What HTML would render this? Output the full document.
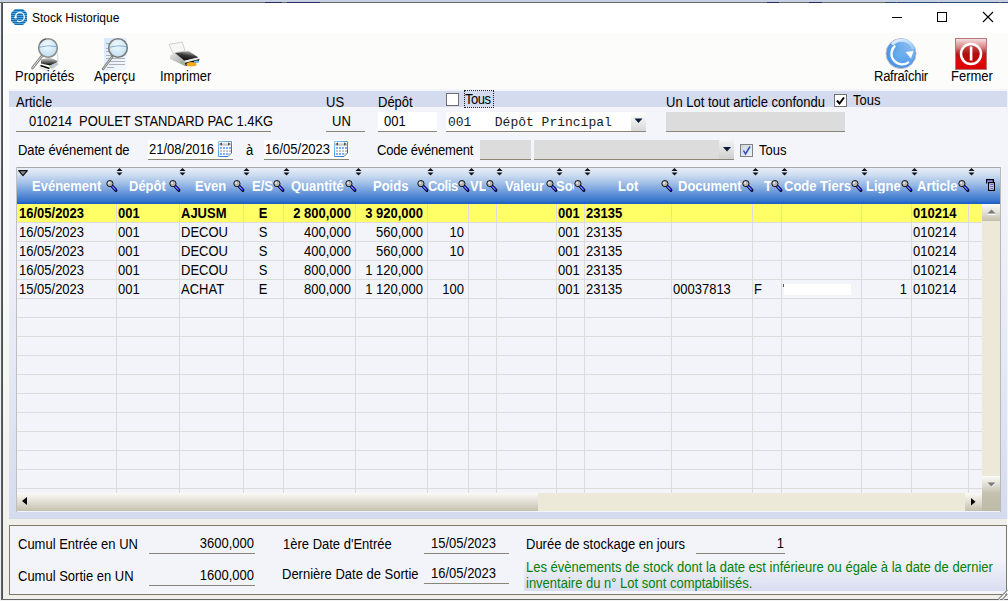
<!DOCTYPE html>
<html><head><meta charset="utf-8"><title>Stock Historique</title>
<style>
html,body{margin:0;padding:0}
.s{transform:scaleY(1.08);transform-origin:0 11px}
body{width:1008px;height:601px;position:relative;overflow:hidden;background:#fff;font-family:"Liberation Sans",sans-serif}
.t{position:absolute;white-space:pre;font-family:"Liberation Sans",sans-serif}
svg{overflow:visible}
</style></head><body>
<div style="position:absolute;left:0px;top:0px;width:1008px;height:2px;background:#c5d0e2"></div>
<div style="position:absolute;left:0px;top:2px;width:1008px;height:1px;background:#6a6a6a"></div>
<div style="position:absolute;left:265px;top:2px;width:17px;height:1px;background:#2a2a60"></div>
<div style="position:absolute;left:287px;top:2px;width:33px;height:1px;background:#2a2a60"></div>
<div style="position:absolute;left:767px;top:2px;width:12px;height:1px;background:#2a2a60"></div>
<div style="position:absolute;left:809px;top:2px;width:13px;height:1px;background:#2a2a60"></div>
<div style="position:absolute;left:885px;top:2px;width:11px;height:1px;background:#2a4a72"></div>
<div style="position:absolute;left:897px;top:2px;width:41px;height:1px;background:#2a4a72"></div>
<div style="position:absolute;left:939px;top:2px;width:60px;height:1px;background:#2a4a72"></div>
<div style="position:absolute;left:1001px;top:2px;width:7px;height:1px;background:#2a4a72"></div>
<div style="position:absolute;left:0px;top:3px;width:1px;height:598px;background:#eeeeee"></div>
<div style="position:absolute;left:1px;top:3px;width:1px;height:598px;background:#5c6068"></div>
<div style="position:absolute;left:2px;top:3px;width:1px;height:597px;background:#4a4f58"></div>
<div style="position:absolute;left:3px;top:3px;width:1005px;height:30px;background:#ffffff"></div>
<div style="position:absolute;left:3px;top:33px;width:1005px;height:56px;background:#fcfcfa"></div>
<div style="position:absolute;left:3px;top:89px;width:6px;height:510px;background:linear-gradient(#fbfbfb,#f8f8f5 40%,#efeee9)"></div>
<div style="position:absolute;left:9px;top:89px;width:999px;height:430px;background:#f4f5fa"></div>
<svg style="position:absolute;left:11px;top:9px" width="16" height="16" viewBox="0 0 16 16"><defs><pattern id="st" width="16" height="2" patternUnits="userSpaceOnUse"><rect width="16" height="1" fill="#4aa8dc"/><rect y="1" width="16" height="1" fill="#1668b4"/></pattern></defs>
<polygon points="4,0 12,0 16,4 16,12 12,16 4,16 0,12 0,4" fill="url(#st)"/>
<path d="M4.6,8.2 C4.2,5.2 6.5,3.4 8.9,3.4 C11.6,3.4 13.3,5.6 13.3,8.2 C13.3,10.8 11.2,12.6 8.6,12.6 C7.6,12.6 6.8,12.3 6.2,11.9" fill="none" stroke="#fff" stroke-width="1.3"/>
<circle cx="4.6" cy="8.2" r="1.2" fill="#fff"/></svg>
<div class="t" style="left:32px;top:12px;font-size:12px;line-height:12px;color:#000;font-weight:normal;font-family:'Liberation Sans',sans-serif;">Stock Historique</div>
<div style="position:absolute;left:892px;top:17px;width:10px;height:1px;background:#000"></div>
<div style="position:absolute;left:937px;top:12px;width:10px;height:10px;border:1px solid #000;box-sizing:border-box"></div>
<svg style="position:absolute;left:982px;top:11px" width="12" height="12" viewBox="0 0 12 12"><path d="M1,1 L11,11 M11,1 L1,11" stroke="#000" stroke-width="1.1"/></svg>
<svg style="position:absolute;left:30px;top:36px" width="34" height="36" viewBox="0 0 34 36"><defs><radialGradient id="lens" cx="0.45" cy="0.35" r="0.7"><stop offset="0" stop-color="#f4fbff"/><stop offset="1" stop-color="#b9dcef"/></radialGradient>
<linearGradient id="ptop" x1="0" y1="0" x2="0" y2="1"><stop offset="0" stop-color="#e0e0e0"/><stop offset="0.6" stop-color="#606060"/><stop offset="1" stop-color="#000"/></linearGradient></defs>
<path d="M11.5,20.5 L2.5,32" stroke="#808080" stroke-width="2.8" stroke-linecap="round"/>
<path d="M11.5,20.5 L2.5,32" stroke="#eeeeee" stroke-width="0.9" stroke-linecap="round"/>
<path d="M27.5,17 L28,26" stroke="#d0d8e0" stroke-width="1"/>
<polygon points="11,23.5 20,21.5 27.5,25 26.5,27 20,29.5 11,27.5" fill="url(#ptop)"/>
<polygon points="20,29.5 27.5,26 28.5,28.5 21.5,33.5" fill="#c4c9d2"/>
<path d="M10.5,29.5 L19.5,32.5" stroke="#000" stroke-width="1.6"/>
<path d="M9.5,31.5 L17,34.5" stroke="#c8c8c8" stroke-width="0.8"/>
<circle cx="20.8" cy="31" r="1.1" fill="#8ed070"/>
<circle cx="18" cy="12" r="9.3" fill="url(#lens)" stroke="#8c8c8c" stroke-width="1.6"/>
<path d="M10,7 A9.3,9.3 0 0 1 16,2.8" stroke="#5a5a5a" stroke-width="1.2" fill="none"/>
<path d="M9.5,11.2 Q18,8.6 26.8,10.6" stroke="#6a9fd0" stroke-width="0.8" fill="none"/></svg>
<svg style="position:absolute;left:100px;top:36px" width="32" height="36" viewBox="0 0 32 36"><defs><linearGradient id="pg" x1="0" y1="0" x2="1" y2="1"><stop offset="0" stop-color="#d6e8fc"/><stop offset="1" stop-color="#f6faff"/></linearGradient></defs>
<rect x="4" y="2" width="23" height="33" fill="url(#pg)"/>
<g stroke="#b0b0b0" stroke-width="1"><line x1="6" y1="7.5" x2="12" y2="7.5"/><line x1="6" y1="12.5" x2="12" y2="12.5"/><line x1="6" y1="15.5" x2="12" y2="15.5"/><line x1="6" y1="19.5" x2="12" y2="19.5"/><line x1="6" y1="22.5" x2="25" y2="22.5"/><line x1="10" y1="25.5" x2="25" y2="25.5"/><line x1="9" y1="28.5" x2="25" y2="28.5"/><line x1="7" y1="31.5" x2="14" y2="31.5"/></g>
<path d="M12,21 L3,33" stroke="#7a7a7a" stroke-width="2.4" stroke-linecap="round"/>
<path d="M12,21 L3,33" stroke="#e0e0e0" stroke-width="0.8"/>
<circle cx="18" cy="12" r="9.3" fill="url(#lens)" stroke="#7c7c7c" stroke-width="1.6" fill-opacity="0.92"/>
<path d="M9.5,11.2 Q18,8.6 26.8,10.6" stroke="#6a9fd0" stroke-width="0.8" fill="none"/></svg>
<svg style="position:absolute;left:165px;top:38px" width="40" height="32" viewBox="0 0 40 32"><defs><linearGradient id="pb" x1="0.7" y1="0" x2="0.3" y2="1"><stop offset="0" stop-color="#c8c8c8"/><stop offset="0.45" stop-color="#3a3a3a"/><stop offset="1" stop-color="#050505"/></linearGradient>
<linearGradient id="pl" x1="0" y1="0" x2="1" y2="1"><stop offset="0" stop-color="#e4e4e4"/><stop offset="1" stop-color="#a0a0a0"/></linearGradient></defs>
<polygon points="4,6.4 17.2,4 20.1,13 7.9,15.4" fill="#f7f7f7" stroke="#c4c4c4" stroke-width="0.8"/>
<polygon points="5,17.5 10,15 20,22.6 20,28 5,21" fill="url(#pl)"/>
<polygon points="10,15 23.7,13 33.5,19.6 19.5,22.8" fill="url(#pb)"/>
<polygon points="19.5,22.8 33.5,19.6 34.5,21 20,24.8" fill="#ececec"/>
<polygon points="20,24.8 34.5,21 33.5,24 20.5,28" fill="#0a0a0a"/>
<ellipse cx="26.5" cy="26.2" rx="5" ry="2.2" fill="#f2aa1a"/>
<ellipse cx="31.5" cy="23.8" rx="2.6" ry="1.2" fill="#6cc4f2"/>
<circle cx="17" cy="24.5" r="1" fill="#74d050"/></svg>
<svg style="position:absolute;left:884px;top:36px" width="34" height="34" viewBox="0 0 34 34"><defs><radialGradient id="rb" cx="0.45" cy="0.55" r="0.6"><stop offset="0" stop-color="#5aa6ec"/><stop offset="0.75" stop-color="#3f8fe4"/><stop offset="1" stop-color="#2a70d6"/></radialGradient>
<linearGradient id="rh" x1="0" y1="0" x2="1" y2="1"><stop offset="0" stop-color="#e4f2ff"/><stop offset="1" stop-color="#8cc8fa"/></linearGradient>
<linearGradient id="rs" x1="1" y1="0" x2="0" y2="1"><stop offset="0" stop-color="#ffffff" stop-opacity="0.55"/><stop offset="0.5" stop-color="#ffffff" stop-opacity="0.12"/><stop offset="1" stop-color="#ffffff" stop-opacity="0"/></linearGradient></defs>
<circle cx="17" cy="17.6" r="15" fill="url(#rb)" stroke="#c7bcc8" stroke-width="1"/>
<circle cx="17" cy="17.6" r="14" fill="url(#rs)"/>
<path d="M8,8.5 A12.5,12.5 0 0 1 29.5,13.5" fill="none" stroke="url(#rh)" stroke-width="3"/>
<path d="M11.2,9.6 A10.3,10.3 0 1 0 25,25.8" fill="none" stroke="#fff" stroke-width="2.3"/>
<polygon points="21.5,16 29.5,15 27,22.5" fill="#fff"/></svg>
<svg style="position:absolute;left:955px;top:38px" width="32" height="32" viewBox="0 0 32 32"><defs><linearGradient id="fr" x1="0" y1="0" x2="0" y2="1"><stop offset="0" stop-color="#f6eaea"/><stop offset="0.3" stop-color="#d88080"/><stop offset="0.5" stop-color="#b01818"/><stop offset="0.7" stop-color="#e00808"/><stop offset="1" stop-color="#d80000"/></linearGradient></defs>
<rect x="0" y="0" width="32" height="32" fill="url(#fr)"/>
<rect x="0.5" y="0.5" width="31" height="31" fill="none" stroke="#b87878" stroke-width="1"/>
<circle cx="16" cy="16" r="9.5" fill="#a80a0a" fill-opacity="0.55"/>
<circle cx="16" cy="16" r="10" fill="none" stroke="#fff" stroke-width="2.5"/>
<rect x="14.8" y="8.5" width="2.6" height="14" fill="#fff"/></svg>
<div class="t s" style="left:15px;top:70px;font-size:13px;line-height:13px;color:#000;font-weight:normal;font-family:'Liberation Sans',sans-serif;">Propriétés</div>
<div class="t s" style="left:94px;top:70px;font-size:13px;line-height:13px;color:#000;font-weight:normal;font-family:'Liberation Sans',sans-serif;">Aperçu</div>
<div class="t s" style="left:160px;top:70px;font-size:13px;line-height:13px;color:#000;font-weight:normal;font-family:'Liberation Sans',sans-serif;">Imprimer</div>
<div class="t s" style="left:874px;top:70px;font-size:13px;line-height:13px;color:#000;font-weight:normal;font-family:'Liberation Sans',sans-serif;letter-spacing:-0.25px">Rafraîchir</div>
<div class="t s" style="left:951px;top:70px;font-size:13px;line-height:13px;color:#000;font-weight:normal;font-family:'Liberation Sans',sans-serif;">Fermer</div>
<div style="position:absolute;left:9px;top:91px;width:998px;height:16px;background:#d5dbee"></div>
<div class="t s" style="left:16px;top:96px;font-size:13px;line-height:13px;color:#000;font-weight:normal;font-family:'Liberation Sans',sans-serif;">Article</div>
<div class="t s" style="left:326px;top:96px;font-size:13px;line-height:13px;color:#000;font-weight:normal;font-family:'Liberation Sans',sans-serif;">US</div>
<div class="t s" style="left:378px;top:96px;font-size:13px;line-height:13px;color:#000;font-weight:normal;font-family:'Liberation Sans',sans-serif;">Dépôt</div>
<div style="position:absolute;left:446px;top:93px;width:13px;height:13px;background:#fff;border:1px solid #707070;box-sizing:border-box"></div>
<div style="position:absolute;left:464px;top:90px;width:30px;height:18px;border:1px dotted #222;box-sizing:border-box"></div>
<div class="t s" style="left:465px;top:93px;font-size:13px;line-height:13px;color:#000;font-weight:normal;font-family:'Liberation Sans',sans-serif;letter-spacing:-0.5px">Tous</div>
<div class="t s" style="left:666px;top:96px;font-size:13px;line-height:13px;color:#000;font-weight:normal;font-family:'Liberation Sans',sans-serif;">Un Lot tout article confondu</div>
<div style="position:absolute;left:834px;top:94px;width:13px;height:13px;background:#fff;border:1px solid #707070;box-sizing:border-box"></div>
<svg style="position:absolute;left:834px;top:94px" width="13" height="13" viewBox="0 0 13 13"><path d="M3,6.5 L5.5,9.5 L10,3.5" fill="none" stroke="#000" stroke-width="2"/></svg>
<div class="t s" style="left:853px;top:94px;font-size:13px;line-height:13px;color:#000;font-weight:normal;font-family:'Liberation Sans',sans-serif;">Tous</div>
<div style="position:absolute;left:16px;top:131px;width:255px;height:1px;background:#8b8574"></div>
<div class="t s" style="left:29px;top:115px;font-size:13px;line-height:13px;color:#000;font-weight:normal;font-family:'Liberation Sans',sans-serif;letter-spacing:-0.07px">010214&nbsp; POULET STANDARD PAC 1.4KG</div>
<div style="position:absolute;left:326px;top:131px;width:39px;height:1px;background:#8b8574"></div>
<div class="t s" style="left:332px;top:115px;font-size:13px;line-height:13px;color:#000;font-weight:normal;font-family:'Liberation Sans',sans-serif;">UN</div>
<div style="position:absolute;left:378px;top:112px;width:59px;height:19px;background:#fff"></div>
<div style="position:absolute;left:378px;top:131px;width:59px;height:1px;background:#8b8574"></div>
<div class="t s" style="left:384px;top:115px;font-size:13px;line-height:13px;color:#000;font-weight:normal;font-family:'Liberation Sans',sans-serif;">001</div>
<div style="position:absolute;left:446px;top:112px;width:185px;height:19px;background:#fff"></div>
<div style="position:absolute;left:631px;top:112px;width:15px;height:19px;background:linear-gradient(#ffffff,#d8d8d8)"></div>
<div style="position:absolute;left:446px;top:131px;width:200px;height:1px;background:#8b8574"></div>
<svg style="position:absolute;left:634px;top:118px" width="9" height="6" viewBox="0 0 9 6"><polygon points="0.5,0.5 8.5,0.5 4.5,5" fill="#0a1a3a"/></svg>
<div class="t" style="left:448px;top:116px;font-size:13px;line-height:13px;color:#1a1a1a;font-weight:normal;font-family:'Liberation Mono',monospace;">001&nbsp;&nbsp;&nbsp;Dépôt Principal</div>
<div style="position:absolute;left:666px;top:112px;width:179px;height:19px;background:#dcdcdc"></div>
<div style="position:absolute;left:666px;top:131px;width:179px;height:1px;background:#8b8574"></div>
<div class="t s" style="left:18px;top:144px;font-size:13px;line-height:13px;color:#000;font-weight:normal;font-family:'Liberation Sans',sans-serif;letter-spacing:-0.12px">Date événement de</div>
<div style="position:absolute;left:148px;top:140px;width:85px;height:19px;background:#fff"></div>
<div style="position:absolute;left:148px;top:159px;width:85px;height:1px;background:#8b8574"></div>
<div class="t s" style="left:149px;top:143px;font-size:13px;line-height:13px;color:#000;font-weight:normal;font-family:'Liberation Sans',sans-serif;">21/08/2016</div>
<svg style="position:absolute;left:218px;top:141px" width="14" height="16" viewBox="0 0 14 16"><defs><linearGradient id="cb148" x1="0" y1="0" x2="1" y2="1"><stop offset="0" stop-color="#8ad0f4"/><stop offset="1" stop-color="#1a58bc"/></linearGradient>
<linearGradient id="ch148" x1="0" y1="0" x2="0" y2="1"><stop offset="0" stop-color="#f4f4f4"/><stop offset="1" stop-color="#b4b4b4"/></linearGradient></defs>
<path d="M0.5,0.5 H13.5 V12 L10,15.5 H0.5 Z" fill="#fff" stroke="url(#cb148)" stroke-width="1"/>
<rect x="1" y="1.5" width="12" height="3" fill="url(#ch148)"/>
<polygon points="1.5,3 4,1.2 4,4.8" fill="#555"/><polygon points="12.5,3 10,1.2 10,4.8" fill="#555"/>
<g fill="#7eaefa"><rect x="2" y="6" width="2" height="2"/><rect x="5" y="6" width="2" height="2"/><rect x="8" y="6" width="2" height="2"/><rect x="11" y="6" width="2" height="2"/>
<rect x="2" y="12" width="2" height="2"/><rect x="5" y="12" width="2" height="2"/><rect x="8" y="12" width="2" height="2"/></g>
<g fill="#c4c4c4"><rect x="2" y="9" width="2" height="2"/><rect x="5" y="9" width="2" height="2"/><rect x="8" y="9" width="2" height="2"/><rect x="11" y="9" width="2" height="2"/></g>
<polygon points="10,15.2 10.5,12 13.2,12" fill="#c8c8c8"/></svg>
<div class="t s" style="left:246px;top:144px;font-size:13px;line-height:13px;color:#000;font-weight:normal;font-family:'Liberation Sans',sans-serif;">à</div>
<div style="position:absolute;left:264px;top:140px;width:85px;height:19px;background:#fff"></div>
<div style="position:absolute;left:264px;top:159px;width:85px;height:1px;background:#8b8574"></div>
<div class="t s" style="left:265px;top:143px;font-size:13px;line-height:13px;color:#000;font-weight:normal;font-family:'Liberation Sans',sans-serif;">16/05/2023</div>
<svg style="position:absolute;left:334px;top:141px" width="14" height="16" viewBox="0 0 14 16"><defs><linearGradient id="cb264" x1="0" y1="0" x2="1" y2="1"><stop offset="0" stop-color="#8ad0f4"/><stop offset="1" stop-color="#1a58bc"/></linearGradient>
<linearGradient id="ch264" x1="0" y1="0" x2="0" y2="1"><stop offset="0" stop-color="#f4f4f4"/><stop offset="1" stop-color="#b4b4b4"/></linearGradient></defs>
<path d="M0.5,0.5 H13.5 V12 L10,15.5 H0.5 Z" fill="#fff" stroke="url(#cb264)" stroke-width="1"/>
<rect x="1" y="1.5" width="12" height="3" fill="url(#ch264)"/>
<polygon points="1.5,3 4,1.2 4,4.8" fill="#555"/><polygon points="12.5,3 10,1.2 10,4.8" fill="#555"/>
<g fill="#7eaefa"><rect x="2" y="6" width="2" height="2"/><rect x="5" y="6" width="2" height="2"/><rect x="8" y="6" width="2" height="2"/><rect x="11" y="6" width="2" height="2"/>
<rect x="2" y="12" width="2" height="2"/><rect x="5" y="12" width="2" height="2"/><rect x="8" y="12" width="2" height="2"/></g>
<g fill="#c4c4c4"><rect x="2" y="9" width="2" height="2"/><rect x="5" y="9" width="2" height="2"/><rect x="8" y="9" width="2" height="2"/><rect x="11" y="9" width="2" height="2"/></g>
<polygon points="10,15.2 10.5,12 13.2,12" fill="#c8c8c8"/></svg>
<div class="t s" style="left:377px;top:144px;font-size:13px;line-height:13px;color:#000;font-weight:normal;font-family:'Liberation Sans',sans-serif;letter-spacing:-0.2px">Code événement</div>
<div style="position:absolute;left:480px;top:140px;width:51px;height:19px;background:#dcdcdc"></div>
<div style="position:absolute;left:480px;top:159px;width:51px;height:1px;background:#8b8574"></div>
<div style="position:absolute;left:534px;top:140px;width:185px;height:19px;background:#dcdcdc"></div>
<div style="position:absolute;left:719px;top:140px;width:15px;height:19px;background:linear-gradient(#f2f2f2,#cfcfcf)"></div>
<div style="position:absolute;left:534px;top:159px;width:200px;height:1px;background:#8b8574"></div>
<svg style="position:absolute;left:723px;top:147px" width="8" height="5" viewBox="0 0 8 5"><polygon points="0,0 8,0 4,4.5" fill="#0a1a3a"/></svg>
<div style="position:absolute;left:740px;top:144px;width:13px;height:13px;background:linear-gradient(135deg,#cfd6e4,#f0f2f6);border:1px solid #808080;box-sizing:border-box"></div>
<svg style="position:absolute;left:740px;top:144px" width="13" height="13" viewBox="0 0 13 13"><path d="M3.5,6.5 L5.5,10 L10,2.5" fill="none" stroke="#3050b0" stroke-width="1.5"/></svg>
<div class="t s" style="left:759px;top:144px;font-size:13px;line-height:13px;color:#000;font-weight:normal;font-family:'Liberation Sans',sans-serif;">Tous</div>
<div style="position:absolute;left:9px;top:160px;width:998px;height:359px;background:linear-gradient(#f4f5fa 0%,#e4e8f5 60%,#d5dbee 100%)"></div>
<div style="position:absolute;left:16px;top:167px;width:985px;height:345px;background:#f3f4fa"></div>
<div style="position:absolute;left:16px;top:167px;width:985px;height:1px;background:#a8a8a8"></div>
<div style="position:absolute;left:16px;top:167px;width:1px;height:345px;background:#c0c0c0"></div>
<div style="position:absolute;left:1000px;top:167px;width:1px;height:345px;background:#b8b8b8"></div>
<div style="position:absolute;left:17px;top:168px;width:983px;height:36px;background:linear-gradient(#e8eef8 0%,#cddcf0 20%,#9bbbe6 45%,#6394d8 70%,#3a76cd 90%,#2464c4 97%,#1a5abf 100%)"></div>
<div style="position:absolute;left:17px;top:204px;width:965px;height:18px;background:#ffff66"></div>
<div style="position:absolute;left:17px;top:222px;width:965px;height:1px;background:#dcdcdc"></div>
<div style="position:absolute;left:17px;top:241px;width:965px;height:1px;background:#dcdcdc"></div>
<div style="position:absolute;left:17px;top:260px;width:965px;height:1px;background:#dcdcdc"></div>
<div style="position:absolute;left:17px;top:279px;width:965px;height:1px;background:#dcdcdc"></div>
<div style="position:absolute;left:17px;top:298px;width:965px;height:1px;background:#dcdcdc"></div>
<div style="position:absolute;left:17px;top:317px;width:965px;height:1px;background:#dcdcdc"></div>
<div style="position:absolute;left:17px;top:336px;width:965px;height:1px;background:#dcdcdc"></div>
<div style="position:absolute;left:17px;top:355px;width:965px;height:1px;background:#dcdcdc"></div>
<div style="position:absolute;left:17px;top:374px;width:965px;height:1px;background:#dcdcdc"></div>
<div style="position:absolute;left:17px;top:393px;width:965px;height:1px;background:#dcdcdc"></div>
<div style="position:absolute;left:17px;top:412px;width:965px;height:1px;background:#dcdcdc"></div>
<div style="position:absolute;left:17px;top:431px;width:965px;height:1px;background:#dcdcdc"></div>
<div style="position:absolute;left:17px;top:450px;width:965px;height:1px;background:#dcdcdc"></div>
<div style="position:absolute;left:17px;top:469px;width:965px;height:1px;background:#dcdcdc"></div>
<div style="position:absolute;left:17px;top:488px;width:965px;height:1px;background:#dcdcdc"></div>
<div style="position:absolute;left:116px;top:204px;width:1px;height:289px;background:#dcdcdc"></div>
<div style="position:absolute;left:179px;top:204px;width:1px;height:289px;background:#dcdcdc"></div>
<div style="position:absolute;left:243px;top:204px;width:1px;height:289px;background:#dcdcdc"></div>
<div style="position:absolute;left:283px;top:204px;width:1px;height:289px;background:#dcdcdc"></div>
<div style="position:absolute;left:355px;top:204px;width:1px;height:289px;background:#dcdcdc"></div>
<div style="position:absolute;left:427px;top:204px;width:1px;height:289px;background:#dcdcdc"></div>
<div style="position:absolute;left:468px;top:204px;width:1px;height:289px;background:#dcdcdc"></div>
<div style="position:absolute;left:496px;top:204px;width:1px;height:289px;background:#dcdcdc"></div>
<div style="position:absolute;left:556px;top:204px;width:1px;height:289px;background:#dcdcdc"></div>
<div style="position:absolute;left:584px;top:204px;width:1px;height:289px;background:#dcdcdc"></div>
<div style="position:absolute;left:671px;top:204px;width:1px;height:289px;background:#dcdcdc"></div>
<div style="position:absolute;left:752px;top:204px;width:1px;height:289px;background:#dcdcdc"></div>
<div style="position:absolute;left:781px;top:204px;width:1px;height:289px;background:#dcdcdc"></div>
<div style="position:absolute;left:861px;top:204px;width:1px;height:289px;background:#dcdcdc"></div>
<div style="position:absolute;left:911px;top:204px;width:1px;height:289px;background:#dcdcdc"></div>
<div style="position:absolute;left:968px;top:204px;width:1px;height:289px;background:#dcdcdc"></div>
<div class="t s" style="left:32px;width:74px;overflow:hidden;top:180px;font-size:13px;line-height:13px;color:#fff;font-weight:bold;">Evénement</div>
<div class="t s" style="left:129px;width:40px;overflow:hidden;top:180px;font-size:13px;line-height:13px;color:#fff;font-weight:bold;">Dépôt</div>
<div class="t s" style="left:195px;width:38px;overflow:hidden;top:180px;font-size:13px;line-height:13px;color:#fff;font-weight:bold;">Even</div>
<div class="t s" style="left:252px;width:21px;overflow:hidden;top:180px;font-size:13px;line-height:13px;color:#fff;font-weight:bold;">E/S</div>
<div class="t s" style="left:291px;width:54px;overflow:hidden;top:180px;font-size:13px;line-height:13px;color:#fff;font-weight:bold;">Quantité</div>
<div class="t s" style="left:373px;width:44px;overflow:hidden;top:180px;font-size:13px;line-height:13px;color:#fff;font-weight:bold;">Poids</div>
<div class="t s" style="left:428px;width:30px;overflow:hidden;top:180px;font-size:13px;line-height:13px;color:#fff;font-weight:bold;letter-spacing:-0.4px;">Colis</div>
<div class="t s" style="left:470px;width:16px;overflow:hidden;top:180px;font-size:13px;line-height:13px;color:#fff;font-weight:bold;">VL</div>
<div class="t s" style="left:505px;width:41px;overflow:hidden;top:180px;font-size:13px;line-height:13px;color:#fff;font-weight:bold;">Valeur</div>
<div class="t s" style="left:556px;width:18px;overflow:hidden;top:180px;font-size:13px;line-height:13px;color:#fff;font-weight:bold;">Soc</div>
<div class="t s" style="left:618px;width:43px;overflow:hidden;top:180px;font-size:13px;line-height:13px;color:#fff;font-weight:bold;">Lot</div>
<div class="t s" style="left:678px;width:64px;overflow:hidden;top:180px;font-size:13px;line-height:13px;color:#fff;font-weight:bold;">Document</div>
<div class="t s" style="left:764px;width:7px;overflow:hidden;top:180px;font-size:13px;line-height:13px;color:#fff;font-weight:bold;">T</div>
<div class="t s" style="left:784px;width:67px;overflow:hidden;top:180px;font-size:13px;line-height:13px;color:#fff;font-weight:bold;">Code Tiers</div>
<div class="t s" style="left:866px;width:35px;overflow:hidden;top:180px;font-size:13px;line-height:13px;color:#fff;font-weight:bold;">Ligne</div>
<div class="t s" style="left:917px;width:41px;overflow:hidden;top:180px;font-size:13px;line-height:13px;color:#fff;font-weight:bold;">Article</div>
<svg style="position:absolute;left:106px;top:180px" width="11" height="11" viewBox="0 0 11 11"><path d="M5.5,5.5 L9.8,10.2" stroke="#000" stroke-width="3.2" stroke-linecap="round"/><path d="M5.7,5.7 L9.5,9.9" stroke="#1c1cff" stroke-width="2" stroke-linecap="round"/><path d="M6.3,6.5 L9.1,9.6" stroke="#fff" stroke-width="0.7"/><circle cx="3.9" cy="3.6" r="3.1" fill="#b4b4b4" stroke="#111" stroke-width="1"/><circle cx="3.1" cy="2.8" r="1.1" fill="#e8e8e8"/></svg>
<svg style="position:absolute;left:169px;top:180px" width="11" height="11" viewBox="0 0 11 11"><path d="M5.5,5.5 L9.8,10.2" stroke="#000" stroke-width="3.2" stroke-linecap="round"/><path d="M5.7,5.7 L9.5,9.9" stroke="#1c1cff" stroke-width="2" stroke-linecap="round"/><path d="M6.3,6.5 L9.1,9.6" stroke="#fff" stroke-width="0.7"/><circle cx="3.9" cy="3.6" r="3.1" fill="#b4b4b4" stroke="#111" stroke-width="1"/><circle cx="3.1" cy="2.8" r="1.1" fill="#e8e8e8"/></svg>
<svg style="position:absolute;left:116px;top:168px" width="7" height="8" viewBox="0 0 7 8"><polygon points="3.5,0 6.5,3 0.5,3" fill="#111"/><polygon points="0.5,4.5 6.5,4.5 3.5,7.5" fill="#111"/></svg>
<svg style="position:absolute;left:233px;top:180px" width="11" height="11" viewBox="0 0 11 11"><path d="M5.5,5.5 L9.8,10.2" stroke="#000" stroke-width="3.2" stroke-linecap="round"/><path d="M5.7,5.7 L9.5,9.9" stroke="#1c1cff" stroke-width="2" stroke-linecap="round"/><path d="M6.3,6.5 L9.1,9.6" stroke="#fff" stroke-width="0.7"/><circle cx="3.9" cy="3.6" r="3.1" fill="#b4b4b4" stroke="#111" stroke-width="1"/><circle cx="3.1" cy="2.8" r="1.1" fill="#e8e8e8"/></svg>
<svg style="position:absolute;left:179px;top:168px" width="7" height="8" viewBox="0 0 7 8"><polygon points="3.5,0 6.5,3 0.5,3" fill="#111"/><polygon points="0.5,4.5 6.5,4.5 3.5,7.5" fill="#111"/></svg>
<svg style="position:absolute;left:273px;top:180px" width="11" height="11" viewBox="0 0 11 11"><path d="M5.5,5.5 L9.8,10.2" stroke="#000" stroke-width="3.2" stroke-linecap="round"/><path d="M5.7,5.7 L9.5,9.9" stroke="#1c1cff" stroke-width="2" stroke-linecap="round"/><path d="M6.3,6.5 L9.1,9.6" stroke="#fff" stroke-width="0.7"/><circle cx="3.9" cy="3.6" r="3.1" fill="#b4b4b4" stroke="#111" stroke-width="1"/><circle cx="3.1" cy="2.8" r="1.1" fill="#e8e8e8"/></svg>
<svg style="position:absolute;left:243px;top:168px" width="7" height="8" viewBox="0 0 7 8"><polygon points="3.5,0 6.5,3 0.5,3" fill="#111"/><polygon points="0.5,4.5 6.5,4.5 3.5,7.5" fill="#111"/></svg>
<svg style="position:absolute;left:345px;top:180px" width="11" height="11" viewBox="0 0 11 11"><path d="M5.5,5.5 L9.8,10.2" stroke="#000" stroke-width="3.2" stroke-linecap="round"/><path d="M5.7,5.7 L9.5,9.9" stroke="#1c1cff" stroke-width="2" stroke-linecap="round"/><path d="M6.3,6.5 L9.1,9.6" stroke="#fff" stroke-width="0.7"/><circle cx="3.9" cy="3.6" r="3.1" fill="#b4b4b4" stroke="#111" stroke-width="1"/><circle cx="3.1" cy="2.8" r="1.1" fill="#e8e8e8"/></svg>
<svg style="position:absolute;left:283px;top:168px" width="7" height="8" viewBox="0 0 7 8"><polygon points="3.5,0 6.5,3 0.5,3" fill="#111"/><polygon points="0.5,4.5 6.5,4.5 3.5,7.5" fill="#111"/></svg>
<svg style="position:absolute;left:417px;top:180px" width="11" height="11" viewBox="0 0 11 11"><path d="M5.5,5.5 L9.8,10.2" stroke="#000" stroke-width="3.2" stroke-linecap="round"/><path d="M5.7,5.7 L9.5,9.9" stroke="#1c1cff" stroke-width="2" stroke-linecap="round"/><path d="M6.3,6.5 L9.1,9.6" stroke="#fff" stroke-width="0.7"/><circle cx="3.9" cy="3.6" r="3.1" fill="#b4b4b4" stroke="#111" stroke-width="1"/><circle cx="3.1" cy="2.8" r="1.1" fill="#e8e8e8"/></svg>
<svg style="position:absolute;left:355px;top:168px" width="7" height="8" viewBox="0 0 7 8"><polygon points="3.5,0 6.5,3 0.5,3" fill="#111"/><polygon points="0.5,4.5 6.5,4.5 3.5,7.5" fill="#111"/></svg>
<svg style="position:absolute;left:458px;top:180px" width="11" height="11" viewBox="0 0 11 11"><path d="M5.5,5.5 L9.8,10.2" stroke="#000" stroke-width="3.2" stroke-linecap="round"/><path d="M5.7,5.7 L9.5,9.9" stroke="#1c1cff" stroke-width="2" stroke-linecap="round"/><path d="M6.3,6.5 L9.1,9.6" stroke="#fff" stroke-width="0.7"/><circle cx="3.9" cy="3.6" r="3.1" fill="#b4b4b4" stroke="#111" stroke-width="1"/><circle cx="3.1" cy="2.8" r="1.1" fill="#e8e8e8"/></svg>
<svg style="position:absolute;left:427px;top:168px" width="7" height="8" viewBox="0 0 7 8"><polygon points="3.5,0 6.5,3 0.5,3" fill="#111"/><polygon points="0.5,4.5 6.5,4.5 3.5,7.5" fill="#111"/></svg>
<svg style="position:absolute;left:486px;top:180px" width="11" height="11" viewBox="0 0 11 11"><path d="M5.5,5.5 L9.8,10.2" stroke="#000" stroke-width="3.2" stroke-linecap="round"/><path d="M5.7,5.7 L9.5,9.9" stroke="#1c1cff" stroke-width="2" stroke-linecap="round"/><path d="M6.3,6.5 L9.1,9.6" stroke="#fff" stroke-width="0.7"/><circle cx="3.9" cy="3.6" r="3.1" fill="#b4b4b4" stroke="#111" stroke-width="1"/><circle cx="3.1" cy="2.8" r="1.1" fill="#e8e8e8"/></svg>
<svg style="position:absolute;left:468px;top:168px" width="7" height="8" viewBox="0 0 7 8"><polygon points="3.5,0 6.5,3 0.5,3" fill="#111"/><polygon points="0.5,4.5 6.5,4.5 3.5,7.5" fill="#111"/></svg>
<svg style="position:absolute;left:546px;top:180px" width="11" height="11" viewBox="0 0 11 11"><path d="M5.5,5.5 L9.8,10.2" stroke="#000" stroke-width="3.2" stroke-linecap="round"/><path d="M5.7,5.7 L9.5,9.9" stroke="#1c1cff" stroke-width="2" stroke-linecap="round"/><path d="M6.3,6.5 L9.1,9.6" stroke="#fff" stroke-width="0.7"/><circle cx="3.9" cy="3.6" r="3.1" fill="#b4b4b4" stroke="#111" stroke-width="1"/><circle cx="3.1" cy="2.8" r="1.1" fill="#e8e8e8"/></svg>
<svg style="position:absolute;left:496px;top:168px" width="7" height="8" viewBox="0 0 7 8"><polygon points="3.5,0 6.5,3 0.5,3" fill="#111"/><polygon points="0.5,4.5 6.5,4.5 3.5,7.5" fill="#111"/></svg>
<svg style="position:absolute;left:574px;top:180px" width="11" height="11" viewBox="0 0 11 11"><path d="M5.5,5.5 L9.8,10.2" stroke="#000" stroke-width="3.2" stroke-linecap="round"/><path d="M5.7,5.7 L9.5,9.9" stroke="#1c1cff" stroke-width="2" stroke-linecap="round"/><path d="M6.3,6.5 L9.1,9.6" stroke="#fff" stroke-width="0.7"/><circle cx="3.9" cy="3.6" r="3.1" fill="#b4b4b4" stroke="#111" stroke-width="1"/><circle cx="3.1" cy="2.8" r="1.1" fill="#e8e8e8"/></svg>
<svg style="position:absolute;left:556px;top:168px" width="7" height="8" viewBox="0 0 7 8"><polygon points="3.5,0 6.5,3 0.5,3" fill="#111"/><polygon points="0.5,4.5 6.5,4.5 3.5,7.5" fill="#111"/></svg>
<svg style="position:absolute;left:661px;top:180px" width="11" height="11" viewBox="0 0 11 11"><path d="M5.5,5.5 L9.8,10.2" stroke="#000" stroke-width="3.2" stroke-linecap="round"/><path d="M5.7,5.7 L9.5,9.9" stroke="#1c1cff" stroke-width="2" stroke-linecap="round"/><path d="M6.3,6.5 L9.1,9.6" stroke="#fff" stroke-width="0.7"/><circle cx="3.9" cy="3.6" r="3.1" fill="#b4b4b4" stroke="#111" stroke-width="1"/><circle cx="3.1" cy="2.8" r="1.1" fill="#e8e8e8"/></svg>
<svg style="position:absolute;left:584px;top:168px" width="7" height="8" viewBox="0 0 7 8"><polygon points="3.5,0 6.5,3 0.5,3" fill="#111"/><polygon points="0.5,4.5 6.5,4.5 3.5,7.5" fill="#111"/></svg>
<svg style="position:absolute;left:742px;top:180px" width="11" height="11" viewBox="0 0 11 11"><path d="M5.5,5.5 L9.8,10.2" stroke="#000" stroke-width="3.2" stroke-linecap="round"/><path d="M5.7,5.7 L9.5,9.9" stroke="#1c1cff" stroke-width="2" stroke-linecap="round"/><path d="M6.3,6.5 L9.1,9.6" stroke="#fff" stroke-width="0.7"/><circle cx="3.9" cy="3.6" r="3.1" fill="#b4b4b4" stroke="#111" stroke-width="1"/><circle cx="3.1" cy="2.8" r="1.1" fill="#e8e8e8"/></svg>
<svg style="position:absolute;left:671px;top:168px" width="7" height="8" viewBox="0 0 7 8"><polygon points="3.5,0 6.5,3 0.5,3" fill="#111"/><polygon points="0.5,4.5 6.5,4.5 3.5,7.5" fill="#111"/></svg>
<svg style="position:absolute;left:771px;top:180px" width="11" height="11" viewBox="0 0 11 11"><path d="M5.5,5.5 L9.8,10.2" stroke="#000" stroke-width="3.2" stroke-linecap="round"/><path d="M5.7,5.7 L9.5,9.9" stroke="#1c1cff" stroke-width="2" stroke-linecap="round"/><path d="M6.3,6.5 L9.1,9.6" stroke="#fff" stroke-width="0.7"/><circle cx="3.9" cy="3.6" r="3.1" fill="#b4b4b4" stroke="#111" stroke-width="1"/><circle cx="3.1" cy="2.8" r="1.1" fill="#e8e8e8"/></svg>
<svg style="position:absolute;left:752px;top:168px" width="7" height="8" viewBox="0 0 7 8"><polygon points="3.5,0 6.5,3 0.5,3" fill="#111"/><polygon points="0.5,4.5 6.5,4.5 3.5,7.5" fill="#111"/></svg>
<svg style="position:absolute;left:851px;top:180px" width="11" height="11" viewBox="0 0 11 11"><path d="M5.5,5.5 L9.8,10.2" stroke="#000" stroke-width="3.2" stroke-linecap="round"/><path d="M5.7,5.7 L9.5,9.9" stroke="#1c1cff" stroke-width="2" stroke-linecap="round"/><path d="M6.3,6.5 L9.1,9.6" stroke="#fff" stroke-width="0.7"/><circle cx="3.9" cy="3.6" r="3.1" fill="#b4b4b4" stroke="#111" stroke-width="1"/><circle cx="3.1" cy="2.8" r="1.1" fill="#e8e8e8"/></svg>
<svg style="position:absolute;left:781px;top:168px" width="7" height="8" viewBox="0 0 7 8"><polygon points="3.5,0 6.5,3 0.5,3" fill="#111"/><polygon points="0.5,4.5 6.5,4.5 3.5,7.5" fill="#111"/></svg>
<svg style="position:absolute;left:901px;top:180px" width="11" height="11" viewBox="0 0 11 11"><path d="M5.5,5.5 L9.8,10.2" stroke="#000" stroke-width="3.2" stroke-linecap="round"/><path d="M5.7,5.7 L9.5,9.9" stroke="#1c1cff" stroke-width="2" stroke-linecap="round"/><path d="M6.3,6.5 L9.1,9.6" stroke="#fff" stroke-width="0.7"/><circle cx="3.9" cy="3.6" r="3.1" fill="#b4b4b4" stroke="#111" stroke-width="1"/><circle cx="3.1" cy="2.8" r="1.1" fill="#e8e8e8"/></svg>
<svg style="position:absolute;left:861px;top:168px" width="7" height="8" viewBox="0 0 7 8"><polygon points="3.5,0 6.5,3 0.5,3" fill="#111"/><polygon points="0.5,4.5 6.5,4.5 3.5,7.5" fill="#111"/></svg>
<svg style="position:absolute;left:958px;top:180px" width="11" height="11" viewBox="0 0 11 11"><path d="M5.5,5.5 L9.8,10.2" stroke="#000" stroke-width="3.2" stroke-linecap="round"/><path d="M5.7,5.7 L9.5,9.9" stroke="#1c1cff" stroke-width="2" stroke-linecap="round"/><path d="M6.3,6.5 L9.1,9.6" stroke="#fff" stroke-width="0.7"/><circle cx="3.9" cy="3.6" r="3.1" fill="#b4b4b4" stroke="#111" stroke-width="1"/><circle cx="3.1" cy="2.8" r="1.1" fill="#e8e8e8"/></svg>
<svg style="position:absolute;left:911px;top:168px" width="7" height="8" viewBox="0 0 7 8"><polygon points="3.5,0 6.5,3 0.5,3" fill="#111"/><polygon points="0.5,4.5 6.5,4.5 3.5,7.5" fill="#111"/></svg>
<svg style="position:absolute;left:968px;top:168px" width="7" height="8" viewBox="0 0 7 8"><polygon points="3.5,0 6.5,3 0.5,3" fill="#111"/><polygon points="0.5,4.5 6.5,4.5 3.5,7.5" fill="#111"/></svg>
<svg style="position:absolute;left:18px;top:170px" width="10" height="7" viewBox="0 0 10 7"><polygon points="0.7,0.7 9.3,0.7 5,5.6" fill="#8a8a8a" stroke="#111" stroke-width="1.2" stroke-linejoin="round"/></svg>
<svg style="position:absolute;left:986px;top:179px" width="10" height="12" viewBox="0 0 10 12"><rect x="1" y="1.2" width="6" height="2" fill="#8c8cf0"/><path d="M0.6,4.5 V0.6 H7.4 V3" fill="none" stroke="#000" stroke-width="1.2"/><rect x="2.6" y="3.6" width="5.8" height="7.8" fill="#e6e6fa" stroke="#000" stroke-width="1.2"/><path d="M4.2,5.6 h3 M4.2,7.5 h3 M4.2,9.4 h3" stroke="#5a50c8" stroke-width="1"/></svg>
<div class="t s" style="left:19px;top:207px;font-size:13px;line-height:13px;color:#000;font-weight:bold;font-family:'Liberation Sans',sans-serif;">16/05/2023</div>
<div class="t s" style="left:118px;top:207px;font-size:13px;line-height:13px;color:#000;font-weight:bold;font-family:'Liberation Sans',sans-serif;">001</div>
<div class="t s" style="left:181px;top:207px;font-size:13px;line-height:13px;color:#000;font-weight:bold;font-family:'Liberation Sans',sans-serif;">AJUSM</div>
<div class="t s" style="left:243px;width:40px;text-align:center;top:207px;font-size:13px;line-height:13px;color:#000;font-weight:bold;">E</div>
<div class="t s" style="left:51px;width:300px;text-align:right;top:207px;font-size:13px;line-height:13px;color:#000;font-weight:bold;">2 800,000</div>
<div class="t s" style="left:123px;width:300px;text-align:right;top:207px;font-size:13px;line-height:13px;color:#000;font-weight:bold;">3 920,000</div>
<div class="t s" style="left:558px;top:207px;font-size:13px;line-height:13px;color:#000;font-weight:bold;font-family:'Liberation Sans',sans-serif;">001</div>
<div class="t s" style="left:586px;top:207px;font-size:13px;line-height:13px;color:#000;font-weight:bold;font-family:'Liberation Sans',sans-serif;">23135</div>
<div class="t s" style="left:913px;top:207px;font-size:13px;line-height:13px;color:#000;font-weight:bold;font-family:'Liberation Sans',sans-serif;">010214</div>
<div class="t s" style="left:19px;top:226px;font-size:13px;line-height:13px;color:#000;font-weight:normal;font-family:'Liberation Sans',sans-serif;">16/05/2023</div>
<div class="t s" style="left:118px;top:226px;font-size:13px;line-height:13px;color:#000;font-weight:normal;font-family:'Liberation Sans',sans-serif;">001</div>
<div class="t s" style="left:181px;top:226px;font-size:13px;line-height:13px;color:#000;font-weight:normal;font-family:'Liberation Sans',sans-serif;">DECOU</div>
<div class="t s" style="left:243px;width:40px;text-align:center;top:226px;font-size:13px;line-height:13px;color:#000;font-weight:normal;">S</div>
<div class="t s" style="left:51px;width:300px;text-align:right;top:226px;font-size:13px;line-height:13px;color:#000;font-weight:normal;">400,000</div>
<div class="t s" style="left:123px;width:300px;text-align:right;top:226px;font-size:13px;line-height:13px;color:#000;font-weight:normal;">560,000</div>
<div class="t s" style="left:164px;width:300px;text-align:right;top:226px;font-size:13px;line-height:13px;color:#000;font-weight:normal;">10</div>
<div class="t s" style="left:558px;top:226px;font-size:13px;line-height:13px;color:#000;font-weight:normal;font-family:'Liberation Sans',sans-serif;">001</div>
<div class="t s" style="left:586px;top:226px;font-size:13px;line-height:13px;color:#000;font-weight:normal;font-family:'Liberation Sans',sans-serif;">23135</div>
<div class="t s" style="left:913px;top:226px;font-size:13px;line-height:13px;color:#000;font-weight:normal;font-family:'Liberation Sans',sans-serif;">010214</div>
<div class="t s" style="left:19px;top:245px;font-size:13px;line-height:13px;color:#000;font-weight:normal;font-family:'Liberation Sans',sans-serif;">16/05/2023</div>
<div class="t s" style="left:118px;top:245px;font-size:13px;line-height:13px;color:#000;font-weight:normal;font-family:'Liberation Sans',sans-serif;">001</div>
<div class="t s" style="left:181px;top:245px;font-size:13px;line-height:13px;color:#000;font-weight:normal;font-family:'Liberation Sans',sans-serif;">DECOU</div>
<div class="t s" style="left:243px;width:40px;text-align:center;top:245px;font-size:13px;line-height:13px;color:#000;font-weight:normal;">S</div>
<div class="t s" style="left:51px;width:300px;text-align:right;top:245px;font-size:13px;line-height:13px;color:#000;font-weight:normal;">400,000</div>
<div class="t s" style="left:123px;width:300px;text-align:right;top:245px;font-size:13px;line-height:13px;color:#000;font-weight:normal;">560,000</div>
<div class="t s" style="left:164px;width:300px;text-align:right;top:245px;font-size:13px;line-height:13px;color:#000;font-weight:normal;">10</div>
<div class="t s" style="left:558px;top:245px;font-size:13px;line-height:13px;color:#000;font-weight:normal;font-family:'Liberation Sans',sans-serif;">001</div>
<div class="t s" style="left:586px;top:245px;font-size:13px;line-height:13px;color:#000;font-weight:normal;font-family:'Liberation Sans',sans-serif;">23135</div>
<div class="t s" style="left:913px;top:245px;font-size:13px;line-height:13px;color:#000;font-weight:normal;font-family:'Liberation Sans',sans-serif;">010214</div>
<div class="t s" style="left:19px;top:264px;font-size:13px;line-height:13px;color:#000;font-weight:normal;font-family:'Liberation Sans',sans-serif;">16/05/2023</div>
<div class="t s" style="left:118px;top:264px;font-size:13px;line-height:13px;color:#000;font-weight:normal;font-family:'Liberation Sans',sans-serif;">001</div>
<div class="t s" style="left:181px;top:264px;font-size:13px;line-height:13px;color:#000;font-weight:normal;font-family:'Liberation Sans',sans-serif;">DECOU</div>
<div class="t s" style="left:243px;width:40px;text-align:center;top:264px;font-size:13px;line-height:13px;color:#000;font-weight:normal;">S</div>
<div class="t s" style="left:51px;width:300px;text-align:right;top:264px;font-size:13px;line-height:13px;color:#000;font-weight:normal;">800,000</div>
<div class="t s" style="left:123px;width:300px;text-align:right;top:264px;font-size:13px;line-height:13px;color:#000;font-weight:normal;">1 120,000</div>
<div class="t s" style="left:558px;top:264px;font-size:13px;line-height:13px;color:#000;font-weight:normal;font-family:'Liberation Sans',sans-serif;">001</div>
<div class="t s" style="left:586px;top:264px;font-size:13px;line-height:13px;color:#000;font-weight:normal;font-family:'Liberation Sans',sans-serif;">23135</div>
<div class="t s" style="left:913px;top:264px;font-size:13px;line-height:13px;color:#000;font-weight:normal;font-family:'Liberation Sans',sans-serif;">010214</div>
<div class="t s" style="left:19px;top:283px;font-size:13px;line-height:13px;color:#000;font-weight:normal;font-family:'Liberation Sans',sans-serif;">15/05/2023</div>
<div class="t s" style="left:118px;top:283px;font-size:13px;line-height:13px;color:#000;font-weight:normal;font-family:'Liberation Sans',sans-serif;">001</div>
<div class="t s" style="left:181px;top:283px;font-size:13px;line-height:13px;color:#000;font-weight:normal;font-family:'Liberation Sans',sans-serif;">ACHAT</div>
<div class="t s" style="left:243px;width:40px;text-align:center;top:283px;font-size:13px;line-height:13px;color:#000;font-weight:normal;">E</div>
<div class="t s" style="left:51px;width:300px;text-align:right;top:283px;font-size:13px;line-height:13px;color:#000;font-weight:normal;">800,000</div>
<div class="t s" style="left:123px;width:300px;text-align:right;top:283px;font-size:13px;line-height:13px;color:#000;font-weight:normal;">1 120,000</div>
<div class="t s" style="left:164px;width:300px;text-align:right;top:283px;font-size:13px;line-height:13px;color:#000;font-weight:normal;">100</div>
<div class="t s" style="left:558px;top:283px;font-size:13px;line-height:13px;color:#000;font-weight:normal;font-family:'Liberation Sans',sans-serif;">001</div>
<div class="t s" style="left:586px;top:283px;font-size:13px;line-height:13px;color:#000;font-weight:normal;font-family:'Liberation Sans',sans-serif;">23135</div>
<div class="t s" style="left:673px;top:283px;font-size:13px;line-height:13px;color:#000;font-weight:normal;font-family:'Liberation Sans',sans-serif;">00037813</div>
<div class="t s" style="left:754px;top:283px;font-size:13px;line-height:13px;color:#000;font-weight:normal;font-family:'Liberation Sans',sans-serif;">F</div>
<div class="t s" style="left:607px;width:300px;text-align:right;top:283px;font-size:13px;line-height:13px;color:#000;font-weight:normal;">1</div>
<div class="t s" style="left:913px;top:283px;font-size:13px;line-height:13px;color:#000;font-weight:normal;font-family:'Liberation Sans',sans-serif;">010214</div>
<div style="position:absolute;left:784px;top:284px;width:67px;height:11px;background:#fff"></div>
<div style="position:absolute;left:783px;top:284px;width:1px;height:3px;background:#555"></div>
<div style="position:absolute;left:982px;top:204px;width:18px;height:289px;background:#ece9d8"></div>
<div style="position:absolute;left:982px;top:204px;width:18px;height:17px;background:linear-gradient(#fbfbf7,#e2e0d6 50%,#c4c0ae)"></div>
<svg style="position:absolute;left:987px;top:209px" width="9" height="7" viewBox="0 0 9 7"><polygon points="4.5,0.5 8.5,4.5 0.5,4.5" fill="#7a7a7a"/><rect x="0.5" y="5" width="8" height="1" fill="#fff"/></svg>
<div style="position:absolute;left:982px;top:476px;width:18px;height:35px;background:linear-gradient(#fbfbf7,#e0ded4 25%,#c4c0ae 50%,#bfbba9)"></div>
<svg style="position:absolute;left:987px;top:482px" width="9" height="7" viewBox="0 0 9 7"><polygon points="0.5,0.5 8.5,0.5 4.5,4.5" fill="#7a7a7a"/><path d="M4.5,5 L8.5,1" stroke="#fff" stroke-width="0.8"/></svg>
<div style="position:absolute;left:17px;top:493px;width:965px;height:18px;background:#ece9d8"></div>
<div style="position:absolute;left:17px;top:493px;width:521px;height:18px;background:linear-gradient(#fbfaf6,#e0ded4 50%,#c4c0ae)"></div>
<div style="position:absolute;left:965px;top:493px;width:17px;height:18px;background:linear-gradient(#fbfaf6,#e0ded4 50%,#c4c0ae)"></div>
<svg style="position:absolute;left:22px;top:497px" width="6" height="9" viewBox="0 0 6 9"><polygon points="5,0 5,8 0,4" fill="#000"/></svg>
<svg style="position:absolute;left:971px;top:498px" width="5" height="8" viewBox="0 0 5 8"><polygon points="0,0 0,7.5 4.5,3.75" fill="#000"/></svg>
<div style="position:absolute;left:9px;top:519px;width:998px;height:6px;background:#f0efe9"></div>
<div style="position:absolute;left:3px;top:595px;width:1005px;height:4px;background:#f0efe9"></div>
<div style="position:absolute;left:9px;top:525px;width:998px;height:70px;background:#f3f4fa;border:1px solid #7d7866;box-sizing:border-box"></div>
<div style="position:absolute;left:524px;top:559px;width:482px;height:32px;background:linear-gradient(#f3f4fa,#d8ddf0)"></div>
<div style="position:absolute;left:2px;top:599px;width:1006px;height:1px;background:#646464"></div>
<div style="position:absolute;left:0px;top:600px;width:1008px;height:1px;background:#f4f4f4"></div>
<div class="t s" style="left:18px;top:538px;font-size:13px;line-height:13px;color:#000;font-weight:normal;font-family:'Liberation Sans',sans-serif;">Cumul Entrée en UN</div>
<div class="t s" style="left:18px;top:570px;font-size:13px;line-height:13px;color:#000;font-weight:normal;font-family:'Liberation Sans',sans-serif;">Cumul Sortie en UN</div>
<div style="position:absolute;left:149px;top:553px;width:106px;height:1px;background:#8b8574"></div>
<div style="position:absolute;left:149px;top:585px;width:106px;height:1px;background:#8b8574"></div>
<div class="t s" style="left:-46px;width:300px;text-align:right;top:537px;font-size:13px;line-height:13px;color:#000;font-weight:normal;">3600,000</div>
<div class="t s" style="left:-46px;width:300px;text-align:right;top:569px;font-size:13px;line-height:13px;color:#000;font-weight:normal;">1600,000</div>
<div class="t s" style="left:283px;top:538px;font-size:13px;line-height:13px;color:#000;font-weight:normal;font-family:'Liberation Sans',sans-serif;">1ère Date d'Entrée</div>
<div class="t s" style="left:282px;top:568px;font-size:13px;line-height:13px;color:#000;font-weight:normal;font-family:'Liberation Sans',sans-serif;">Dernière Date de Sortie</div>
<div style="position:absolute;left:424px;top:553px;width:85px;height:1px;background:#8b8574"></div>
<div style="position:absolute;left:424px;top:583px;width:85px;height:1px;background:#8b8574"></div>
<div class="t s" style="left:431px;top:537px;font-size:13px;line-height:13px;color:#000;font-weight:normal;font-family:'Liberation Sans',sans-serif;">15/05/2023</div>
<div class="t s" style="left:431px;top:567px;font-size:13px;line-height:13px;color:#000;font-weight:normal;font-family:'Liberation Sans',sans-serif;">16/05/2023</div>
<div class="t s" style="left:526px;top:538px;font-size:13px;line-height:13px;color:#000;font-weight:normal;font-family:'Liberation Sans',sans-serif;">Durée de stockage en jours</div>
<div style="position:absolute;left:696px;top:553px;width:89px;height:1px;background:#8b8574"></div>
<div class="t s" style="left:484px;width:300px;text-align:right;top:537px;font-size:13px;line-height:13px;color:#000;font-weight:normal;">1</div>
<div class="t s" style="left:526px;top:561px;font-size:13px;line-height:13px;color:#067f06;font-weight:normal;font-family:'Liberation Sans',sans-serif;">Les évènements de stock dont la date est inférieure ou égale à la date de dernier</div>
<div class="t s" style="left:526px;top:577px;font-size:13px;line-height:13px;color:#067f06;font-weight:normal;font-family:'Liberation Sans',sans-serif;">inventaire du n° Lot sont comptabilisés.</div>
<svg style="position:absolute;left:996px;top:587px" width="12" height="14" viewBox="0 0 12 14"><path d="M3,12.5 L12,3.5 M7,12.5 L12,7.5" stroke="#fff" stroke-width="1.6"/><path d="M2.5,12 L11.5,3 M6.5,12 L11.5,7" stroke="#8c8c8c" stroke-width="1.1"/></svg>
</body></html>
